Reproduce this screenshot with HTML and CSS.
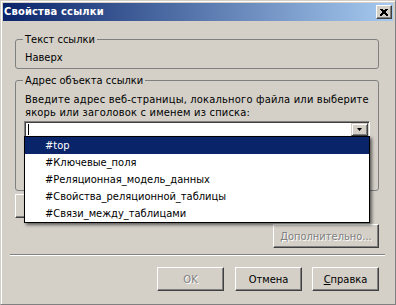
FILE: index.html
```html
<!DOCTYPE html>
<html lang="ru">
<head>
<meta charset="utf-8">
<title>Свойства ссылки</title>
<link rel="stylesheet" href="styles.css">
</head>
<body>
<div class="window">
  <div class="titlebar">
    <span class="title">Свойства ссылки</span>
    <button class="close" aria-label="Закрыть">
      <svg width="8" height="7" viewBox="0 0 8 7"><path d="M0.5 0 L7.5 7 M1.5 0 L8.5 7 M7.5 0 L0.5 7 M6.5 0 L-0.5 7" stroke="#000" stroke-width="1" fill="none" shape-rendering="crispEdges"/></svg>
    </button>
  </div>
  <div class="body">
    <fieldset class="group g1">
      <legend>Текст ссылки</legend>
      <div class="value">Наверх</div>
    </fieldset>
    <fieldset class="group g2">
      <legend>Адрес объекта ссылки</legend>
      <p class="hint">Введите адрес веб-страницы, локального файла или выберите<br>якорь или заголовок с именем из списка:</p>
      <div class="combo">
        <div class="field"><span class="caret"></span></div>
        <span class="drop">
          <svg width="5" height="3" viewBox="0 0 5 3"><polygon points="0,0 5,0 2.5,3" fill="#000"/></svg>
        </span>
        <ul class="list">
          <li class="sel">#top</li>
          <li>#Ключевые_поля</li>
          <li>#Реляционная_модель_данных</li>
          <li>#Свойства_реляционной_таблицы</li>
          <li>#Связи_между_таблицами</li>
        </ul>
      </div>
      <div class="spacer"></div>
    </fieldset>
    <div class="row-left"><button class="btn hidden-btn" aria-label="Обзор"></button></div>
    <div class="row-right"><button class="btn more" disabled><u>Д</u>ополнительно...</button></div>
    <hr class="sep">
    <div class="actions">
      <button class="btn act ok" disabled>OK</button>
      <button class="btn act cancel">Отмена</button>
      <button class="btn act"><u>С</u>правка</button>
    </div>
  </div>
</div>
</body>
</html>
```

FILE: styles.css
```css
html, body {
  margin: 0;
  padding: 0;
  background: #d4d0c8;
}

.window {
  width: 396px;
  height: 305px;
  box-sizing: border-box;
  background: #d4d0c8;
  border-style: solid;
  border-width: 1px;
  border-color: #d4d0c8 #808080 #808080 #d4d0c8;
  box-shadow: inset 1px 1px #fff;
  padding: 2px 2px 0 2px;
  font-family: "DejaVu Sans Condensed", "Liberation Sans", sans-serif;
  font-size: 11px;
  line-height: 13px;
  color: #000;
  overflow: hidden;
}

.titlebar {
  height: 18px;
  display: flex;
  align-items: center;
  justify-content: space-between;
  background: linear-gradient(to right, #0a246a, #a6caf0);
  padding: 0 1px 0 1px;
}

.title {
  color: #fff;
  font-weight: bold;
  line-height: 18px;
  letter-spacing: 0.2px;
  white-space: nowrap;
}

.close {
  width: 16px;
  height: 14px;
  margin: 0;
  padding: 0;
  box-sizing: border-box;
  background: #d4d0c8;
  border: 1px solid;
  border-color: #fff #404040 #404040 #fff;
  box-shadow: inset -1px -1px #808080;
  display: flex;
  align-items: center;
  justify-content: center;
}

.close svg {
  display: block;
}

.body {
  padding-top: 12px;
  display: flex;
  flex-direction: column;
}

.group {
  margin: 0 14px 0 12px;
  padding: 0 8px 0 8px;
  border: 1px solid #808080;
  border-radius: 3px;
  min-width: 0;
}

.group legend {
  padding: 0 2px;
  margin-left: -1px;
  line-height: 13px;
}

.g1 {
  padding-bottom: 4px;
}

.value {
  margin: 5px 0 0 1px;
}

.g2 {
  margin-top: 5px;
  padding-bottom: 0;
}

.hint {
  margin: 6px 0 0 1px;
  white-space: nowrap;
  letter-spacing: 0.2px;
}

.combo {
  position: relative;
  margin-top: 2px;
  height: 17px;
  box-sizing: border-box;
  border: 1px solid;
  border-color: #808080 #fff #fff #808080;
  box-shadow: inset 1px 1px #404040, inset -1px -1px #d4d0c8;
  background: #fff;
  padding: 1px;
  display: flex;
}

.field {
  flex: 1;
}

.caret {
  display: block;
  width: 1px;
  height: 11px;
  margin: 1px 0 0 2px;
  background: #000;
}

.drop {
  width: 17px;
  height: 13px;
  box-sizing: border-box;
  background: #d4d0c8;
  border: 1px solid;
  border-color: #d4d0c8 #404040 #404040 #d4d0c8;
  box-shadow: inset 1px 1px #fff, inset -1px -1px #808080;
  display: flex;
  align-items: center;
  justify-content: center;
}

.drop svg {
  display: block;
}

.list {
  position: absolute;
  z-index: 5;
  left: -1px;
  top: calc(100% - 1px);
  width: 346px;
  box-sizing: border-box;
  margin: 0;
  padding: 0;
  list-style: none;
  background: #fff;
  border: 1px solid #000;
  box-shadow: 2px 2px 3px rgba(0, 0, 0, 0.55);
}

.list li {
  height: 17px;
  line-height: 17px;
  padding-left: 20px;
  white-space: nowrap;
}

.list li.sel {
  background: #0a246a;
  color: #fff;
}

.spacer {
  height: 52px;
}

.btn {
  font-family: inherit;
  font-size: 11px;
  line-height: 13px;
  color: #000;
  height: 24px;
  margin: 0;
  padding: 0;
  box-sizing: border-box;
  background: #d4d0c8;
  border: 1px solid;
  border-color: #fff #404040 #404040 #fff;
  box-shadow: inset -1px -1px #808080;
}

.btn u {
  text-decoration: underline;
}

.btn:disabled {
  color: #808080;
  text-shadow: 1px 1px 0 #fff;
}

.row-left {
  display: flex;
  margin: 3px 14px 0 12px;
}

.hidden-btn {
  width: 120px;
}

.row-right {
  display: flex;
  justify-content: flex-end;
  margin: 6px 14px 0 12px;
}

.more {
  width: 106px;
}

.sep {
  margin: 6px 8px 0 7px;
  height: 0;
  border: 0;
  border-top: 1px solid #808080;
  border-bottom: 1px solid #fff;
}

.actions {
  display: flex;
  justify-content: flex-end;
  margin: 11px 14px 0 0;
  gap: 10px;
}

.act {
  width: 67px;
}

.ok {
  margin-right: 1px;
}
```
